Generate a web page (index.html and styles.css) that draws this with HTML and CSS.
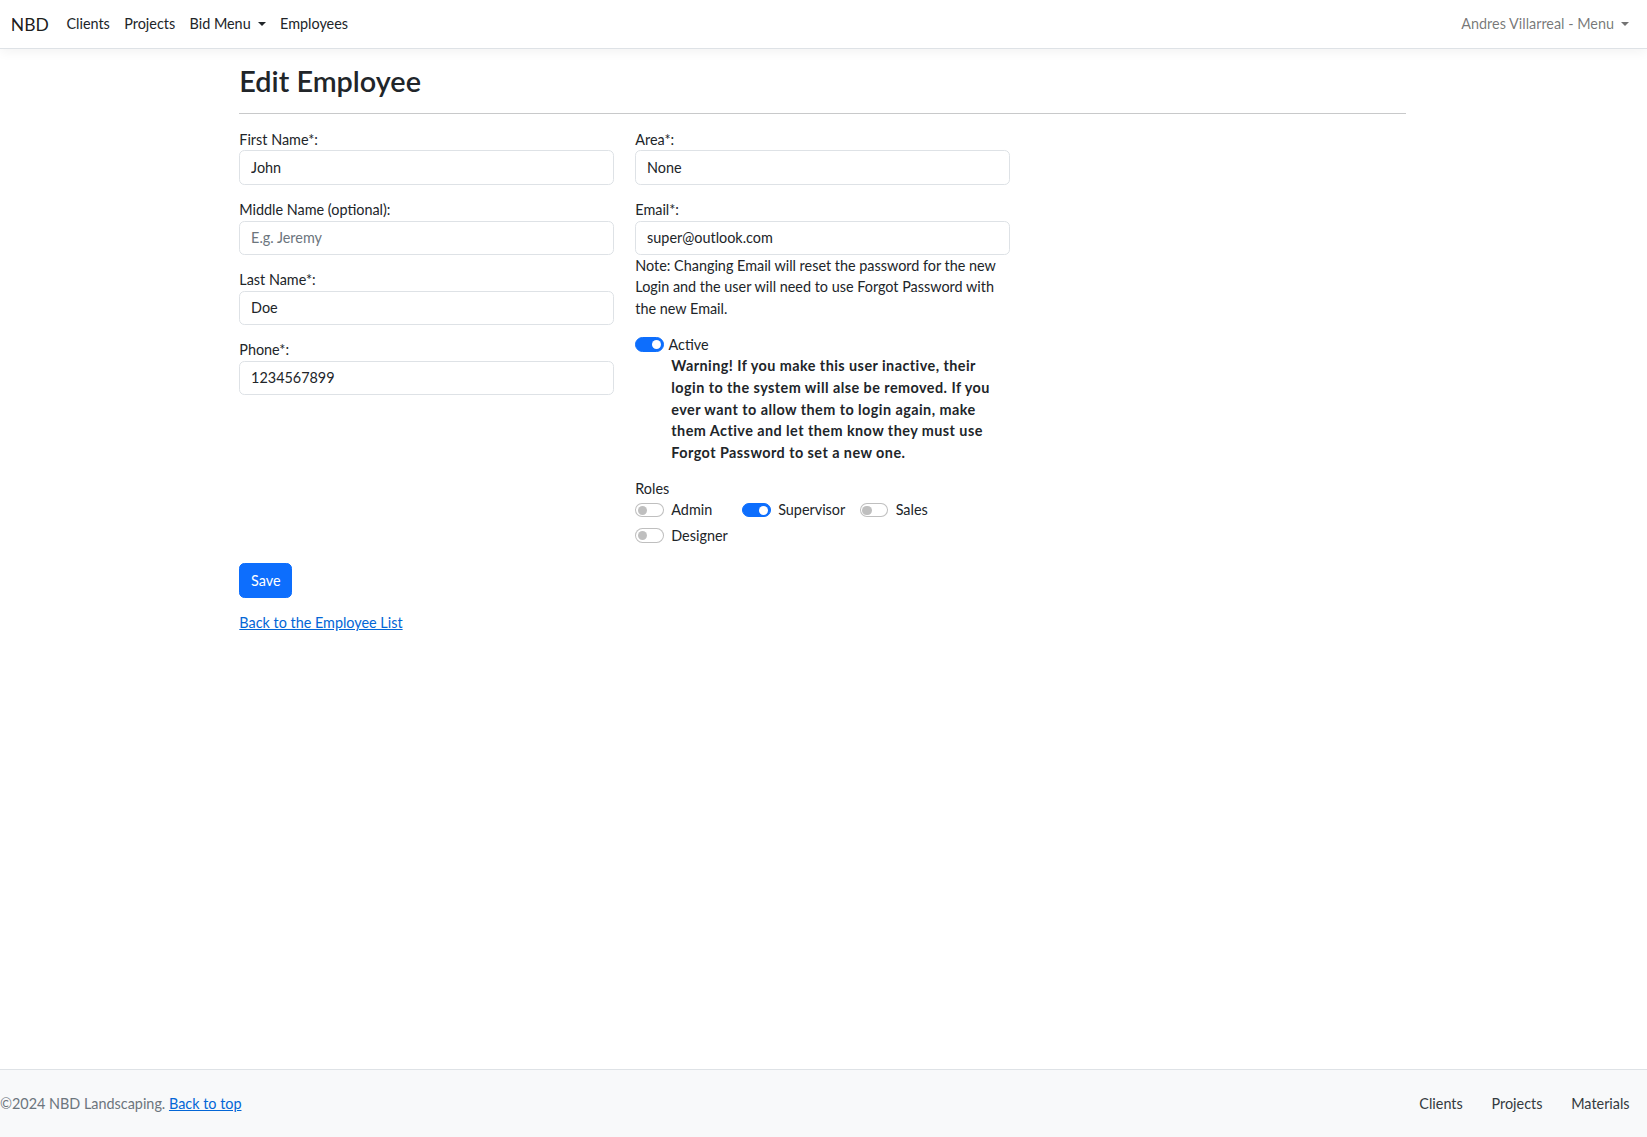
FILE: index.html
```html
<!DOCTYPE html>
<html lang="en">
<head>
<meta charset="utf-8">
<title>Edit Employee - NBD</title>
<link rel="stylesheet" href="styles.css">
</head>
<body>
<header>
  <nav class="navbar">
    <div class="nav-left">
      <a class="brand" href="#">NBD</a>
      <ul class="nav-list">
        <li><a class="nav-link" href="#">Clients</a></li>
        <li><a class="nav-link" href="#">Projects</a></li>
        <li><a class="nav-link dropdown-toggle" href="#">Bid Menu</a></li>
        <li><a class="nav-link" href="#">Employees</a></li>
      </ul>
    </div>
    <a class="nav-link user-menu dropdown-toggle" href="#">Andres Villarreal - Menu</a>
  </nav>
</header>

<main class="container">
  <h2 class="page-title">Edit Employee</h2>
  <hr class="rule">
  <form class="edit-form">
    <div class="form-row">
      <div class="form-col">
        <div class="form-group">
          <label class="control-label">First Name*:</label>
          <input class="form-control" type="text" value="John">
        </div>
        <div class="form-group">
          <label class="control-label">Middle Name (optional):</label>
          <input class="form-control" type="text" placeholder="E.g. Jeremy">
        </div>
        <div class="form-group">
          <label class="control-label">Last Name*:</label>
          <input class="form-control" type="text" value="Doe">
        </div>
        <div class="form-group">
          <label class="control-label">Phone*:</label>
          <input class="form-control" type="text" value="1234567899">
        </div>
      </div>
      <div class="form-col">
        <div class="form-group">
          <label class="control-label">Area*:</label>
          <input class="form-control" type="text" value="None">
        </div>
        <div class="form-group">
          <label class="control-label">Email*:</label>
          <input class="form-control" type="text" value="super@outlook.com">
          <div class="note">Note: Changing Email will reset the password for the new Login and the user will need to use Forgot Password with the new Email.</div>
        </div>
        <div class="form-group">
          <label class="active-row">
            <input class="switch" type="checkbox" checked>
            <span>Active</span>
          </label>
          <div class="warning">Warning! If you make this user inactive, their login to the system will alse be removed. If you ever want to allow them to login again, make them Active and let them know they must use Forgot Password to set a new one.</div>
        </div>
        <div class="form-group roles-group">
          <label class="control-label">Roles</label>
          <div class="roles">
            <label class="role"><input class="switch" type="checkbox"><span>Admin</span></label>
            <label class="role"><input class="switch" type="checkbox" checked><span>Supervisor</span></label>
            <label class="role"><input class="switch" type="checkbox"><span>Sales</span></label>
            <label class="role"><input class="switch" type="checkbox"><span>Designer</span></label>
          </div>
        </div>
      </div>
      <div class="form-col"></div>
    </div>
    <div class="form-group">
      <button class="btn-primary" type="button">Save</button>
    </div>
  </form>
  <div class="back">
    <a class="link" href="#">Back to the Employee List</a>
  </div>
</main>

<footer class="footer">
  <div class="footer-left">©2024 NBD Landscaping. <a class="link" href="#">Back to top</a></div>
  <nav class="footer-nav">
    <a class="footer-link" href="#">Clients</a>
    <a class="footer-link" href="#">Projects</a>
    <a class="footer-link" href="#">Materials</a>
  </nav>
</footer>
</body>
</html>
```

FILE: styles.css
```css
* {
  box-sizing: border-box;
}

html, body {
  height: 100%;
}

body {
  margin: 0;
  min-height: 100vh;
  display: flex;
  flex-direction: column;
  font-family: Lato, "Segoe UI", "Liberation Sans", sans-serif;
  font-size: 14.4px;
  line-height: 21.6px;
  color: #212529;
  background: #fff;
}

/* ---------- Navbar ---------- */
.navbar {
  display: flex;
  align-items: center;
  justify-content: space-between;
  height: 49px;
  padding: 0 10.8px;
  background: #fff;
  border-bottom: 1px solid #dee2e6;
  box-shadow: 0 3.6px 10.8px rgba(0, 0, 0, 0.05);
  margin-bottom: 14.4px;
}

.nav-left {
  display: flex;
  align-items: center;
}

.brand {
  font-size: 17.5px;
  line-height: 27px;
  color: rgba(0, 0, 0, 0.9);
  text-decoration: none;
  margin-right: 10.5px;
}

.nav-list {
  display: flex;
  list-style: none;
  margin: 0;
  padding: 0;
}

.nav-link {
  display: block;
  padding: 7.2px;
  color: #212529;
  text-decoration: none;
}

.user-menu {
  color: rgba(0, 0, 0, 0.55);
}

.dropdown-toggle::after {
  content: "";
  display: inline-block;
  margin-left: 7px;
  vertical-align: 3.7px;
  border-top: 4.3px solid;
  border-right: 4.3px solid transparent;
  border-left: 4.3px solid transparent;
  border-bottom: 0;
}

/* ---------- Main ---------- */
.container {
  flex: 1 0 auto;
  width: 100%;
  max-width: 1188px;
  margin: 0 auto;
  padding: 0 10.8px;
  position: relative;
  left: -1px;
}

.page-title {
  font-size: 28.8px;
  line-height: 34.56px;
  font-weight: 600;
  margin: 1px 0 7.2px;
}

.rule {
  margin: 14.4px 0;
  border: 0;
  border-top: 1px solid #c8c9ca;
  height: 0;
}

.edit-form {
  margin: 0;
}

.form-row {
  display: grid;
  grid-template-columns: repeat(3, minmax(0, 1fr));
  column-gap: 21.6px;
}

.form-group {
  margin-bottom: 14.4px;
}

.roles-group {
  margin-bottom: 17px;
}

.control-label {
  display: block;
}

.form-control {
  display: block;
  width: 100%;
  height: 34.2px;
  padding: 5.4px 10.8px;
  font: inherit;
  line-height: 21.6px;
  color: #212529;
  background: #fff;
  border: 1px solid #dee2e6;
  border-radius: 5.4px;
}

.form-control::placeholder {
  color: #6c757d;
  opacity: 1;
}

.note {
  line-height: 21.6px;
}

/* ---------- Switches ---------- */
.switch {
  appearance: none;
  -webkit-appearance: none;
  position: relative;
  flex: none;
  width: 28.8px;
  height: 14.4px;
  margin: 0;
  border: 1px solid rgba(0, 0, 0, 0.25);
  border-radius: 14.4px;
  background: #fff;
}

.switch::after {
  content: "";
  position: absolute;
  top: 1.6px;
  left: 1.8px;
  width: 9.2px;
  height: 9.2px;
  border-radius: 50%;
  background: rgba(0, 0, 0, 0.25);
}

.switch:checked {
  background: #0d6efd;
  border-color: #0d6efd;
}

.switch:checked::after {
  left: auto;
  right: 1.8px;
  background: #fff;
}

.active-row {
  display: flex;
  align-items: center;
  gap: 4.4px;
  height: 21.6px;
}

.warning {
  padding-left: 36px;
  padding-right: 14px;
  font-weight: 700;
  letter-spacing: 0.45px;
}

.roles {
  display: grid;
  grid-template-columns: repeat(3, auto);
  justify-content: start;
  column-gap: 14.4px;
  row-gap: 3.6px;
  margin-bottom: 1.8px;
}

.role {
  display: flex;
  align-items: center;
  gap: 7.2px;
  height: 21.6px;
}

/* ---------- Buttons & links ---------- */
.btn-primary {
  display: inline-block;
  padding: 5.4px 10.8px;
  font: inherit;
  line-height: 21.6px;
  color: #fff;
  background: #0d6efd;
  border: 1px solid #0d6efd;
  border-radius: 5.4px;
}

.back {
  margin-top: 3px;
}

.link {
  color: #0366d6;
  text-decoration: underline;
}

/* ---------- Footer ---------- */
.footer {
  display: flex;
  align-items: center;
  justify-content: space-between;
  height: 68px;
  padding: 0 3px 0 0;
  background: #f8f9fa;
  border-top: 1px solid #dee2e6;
  white-space: nowrap;
}

.footer-left {
  color: #6c757d;
}

.footer-nav {
  display: flex;
}

.footer-link {
  padding: 0 14.4px;
  color: #343a40;
  text-decoration: none;
}
```
